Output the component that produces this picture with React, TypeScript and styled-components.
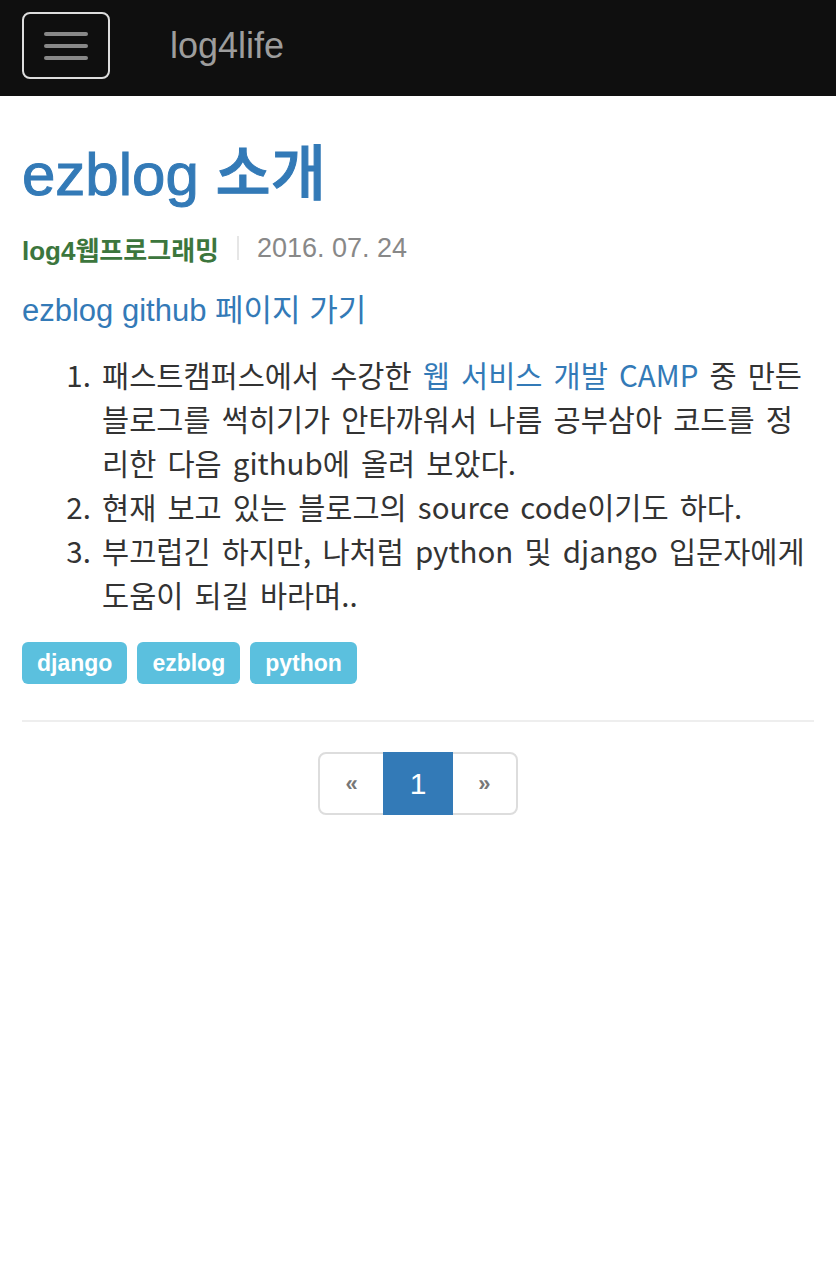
import React from "react";
import styled, { createGlobalStyle } from "styled-components";

const GlobalStyle = createGlobalStyle`
  html, body { margin: 0; padding: 0; background: #fff; }
  body {
    font-family: "Liberation Sans", "Noto Sans CJK KR", sans-serif;
    color: #333;
  }
  * { box-sizing: border-box; }
`;

const Navbar = styled.header`
  height: 96px;
  background: #0f0f0f;
  display: flex;
  align-items: flex-start;
  padding: 12px 22px 0;
  gap: 60px;
`;

const Toggle = styled.button`
  width: 88px;
  height: 67px;
  border: 2px solid #ddd;
  border-radius: 8px;
  background: transparent;
  display: flex;
  flex-direction: column;
  align-items: center;
  justify-content: center;
  gap: 8px;
  padding: 0;
`;

const Bar = styled.span`
  display: block;
  width: 44px;
  height: 4px;
  border-radius: 2px;
  background: #888;
`;

const Brand = styled.a`
  font-family: "Liberation Sans", sans-serif;
  font-size: 36px;
  line-height: 67px;
  color: #9d9d9d;
  text-decoration: none;
`;

const Main = styled.main`
  padding: 0 22px;
`;

const Title = styled.h1`
  margin: 48px 0 0;
  font-family: "Liberation Sans", "Noto Sans CJK KR", sans-serif;
  font-size: 60px;
  line-height: 62px;
  font-weight: 500;
  color: #337ab7;
  -webkit-text-stroke: 1px #337ab7;
`;

const Meta = styled.div`
  margin-top: 24px;
  height: 36px;
  display: flex;
  align-items: center;
`;

const Category = styled.a`
  font-family: "Liberation Sans", "Noto Sans CJK KR", sans-serif;
  font-size: 26px;
  font-weight: 700;
  color: #3c763d;
  text-decoration: none;
`;

const Divider = styled.span`
  display: block;
  width: 2px;
  height: 24px;
  background: #e6e6e6;
  margin: 0 18px;
`;

const DateText = styled.span`
  font-family: "Liberation Sans", sans-serif;
  font-size: 27px;
  color: #888;
`;

const LinkPara = styled.p`
  margin: 23px 0 0;
  font-size: 31px;
  line-height: 44px;
`;

const BlueLink = styled.a`
  color: #337ab7;
  text-decoration: none;
`;

const List = styled.ol`
  margin: 19px 0 0;
  padding-left: 80px;
  font-family: "Noto Sans CJK KR", sans-serif;
  font-size: 29.5px;
  line-height: 44px;
  word-spacing: 4.5px;
  color: #333;
`;

const Tags = styled.div`
  margin-top: 26px;
  display: flex;
  gap: 10px;
`;

const Tag = styled.a`
  display: inline-flex;
  align-items: center;
  height: 42px;
  padding: 0 15px;
  border-radius: 6px;
  background: #5bc0de;
  color: #fff;
  font-family: "Liberation Sans", sans-serif;
  font-weight: 700;
  font-size: 23px;
  text-decoration: none;
`;

const Rule = styled.hr`
  margin: 36px 0 0;
  border: 0;
  border-top: 2px solid #eee;
`;

const PagerWrap = styled.nav`
  margin-top: 30px;
  display: flex;
  justify-content: center;
`;

const Pager = styled.ul`
  display: flex;
  list-style: none;
  margin: 0;
  padding: 0;
`;

const PageItem = styled.li<{ $active?: boolean; $arrow?: boolean }>`
  height: 63px;
  padding: 0 25px;
  display: flex;
  align-items: center;
  justify-content: center;
  margin-left: -2px;
  border: 2px solid ${(p) => (p.$active ? "#337ab7" : "#ddd")};
  background: ${(p) => (p.$active ? "#337ab7" : "#fff")};
  color: ${(p) => (p.$active ? "#fff" : "#777")};
  font-family: "Liberation Sans", sans-serif;
  font-size: ${(p) => (p.$arrow ? "22px" : "30px")};
  font-weight: ${(p) => (p.$arrow ? 700 : 400)};
  position: relative;
  z-index: ${(p) => (p.$active ? 1 : 0)};
  &:first-child {
    margin-left: 0;
    border-radius: 8px 0 0 8px;
  }
  &:last-child {
    border-radius: 0 8px 8px 0;
  }
`;

export default function App() {
  return (
    <>
      <GlobalStyle />
      <Navbar>
        <Toggle aria-label="menu">
          <Bar />
          <Bar />
          <Bar />
        </Toggle>
        <Brand href="#">log4life</Brand>
      </Navbar>
      <Main>
        <Title>ezblog 소개</Title>
        <Meta>
          <Category href="#">log4웹프로그래밍</Category>
          <Divider />
          <DateText>2016. 07. 24</DateText>
        </Meta>
        <LinkPara>
          <BlueLink href="#">ezblog github 페이지 가기</BlueLink>
        </LinkPara>
        <List>
          <li>
            패스트캠퍼스에서 수강한 <BlueLink href="#">웹 서비스 개발 CAMP</BlueLink> 중 만든
            블로그를 썩히기가 안타까워서 나름 공부삼아 코드를 정리한 다음 github에 올려 보았다.
          </li>
          <li>현재 보고 있는 블로그의 source code이기도 하다.</li>
          <li>부끄럽긴 하지만, 나처럼 python 및 django 입문자에게 도움이 되길 바라며..</li>
        </List>
        <Tags>
          <Tag href="#">django</Tag>
          <Tag href="#">ezblog</Tag>
          <Tag href="#">python</Tag>
        </Tags>
        <Rule />
        <PagerWrap>
          <Pager>
            <PageItem $arrow>«</PageItem>
            <PageItem $active>1</PageItem>
            <PageItem $arrow>»</PageItem>
          </Pager>
        </PagerWrap>
      </Main>
    </>
  );
}
